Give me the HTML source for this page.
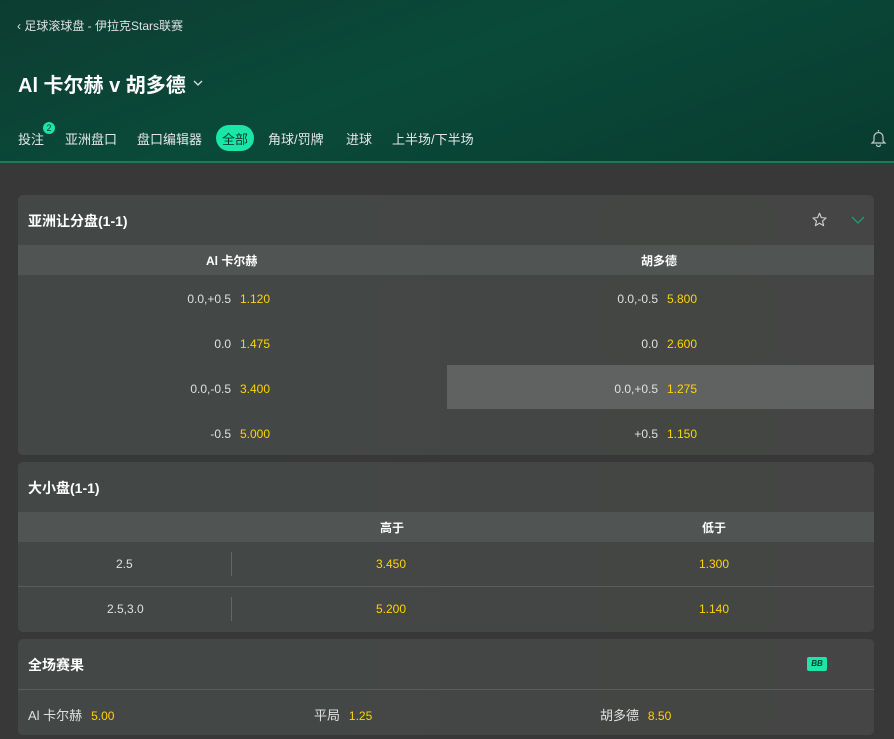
<!DOCTYPE html>
<html><head><meta charset="utf-8"><style>
*{margin:0;padding:0;box-sizing:border-box}
body{width:894px;height:739px;background:#383838;font-family:"Liberation Sans","Noto Sans CJK SC",sans-serif;color:#fff;position:relative;overflow:hidden}
.hdr{position:absolute;left:0;top:0;width:894px;height:163px;background:linear-gradient(160deg,#0c3d31 0%,#0a4a39 45%,#083c2f 100%);border-bottom:2px solid #1f7a5c}
.a{position:absolute;white-space:nowrap}
.card{position:absolute;left:18px;width:856px;background:linear-gradient(90deg,#434846,#444544);border-radius:5px;overflow:hidden}
.ttl{position:absolute;left:10px;font-size:14px;font-weight:bold}
.th{position:absolute;left:0;width:856px;height:30px;background:#505553;font-size:12px;font-weight:bold}
.n{color:#e0e0e0;font-size:12px}
.y{color:#ffd400;font-size:12px}
.tab{position:absolute;top:129px;font-size:13px;color:#e6e6e6}
</style></head><body>
<div class="hdr">
<div class="a" style="left:17px;top:17px;font-size:12px;color:#e0e0e0">‹ 足球滚球盘 - 伊拉克Stars联赛</div>
<div class="a" style="left:18px;top:69px;font-size:20px;font-weight:bold">Al 卡尔赫 v 胡多德</div>
<svg class="a" style="left:193px;top:80px" width="10" height="7"><path d="M1 1l4 4 4-4" stroke="#e0e0e0" stroke-width="1.3" fill="none"/></svg>
<div class="tab" style="left:18px">投注</div>
<div class="a" style="left:43px;top:122px;width:12px;height:12px;border-radius:6px;background:#19e6a7;color:#0b3b2f;font-size:9px;text-align:center;line-height:12px">2</div>
<div class="tab" style="left:65px">亚洲盘口</div>
<div class="tab" style="left:137px">盘口编辑器</div>
<div class="a" style="left:216px;top:125px;width:38px;height:26px;border-radius:13px;background:#19e6a7;color:#0b3b2f;font-size:13px;display:flex;align-items:center;justify-content:center">全部</div>
<div class="tab" style="left:268px">角球/罚牌</div>
<div class="tab" style="left:346px">进球</div>
<div class="tab" style="left:392px">上半场/下半场</div>
<svg class="a" style="left:870px;top:129px" width="17" height="18" viewBox="0 0 17 18" fill="none" stroke="#c8c8c8" stroke-width="1.2"><path d="M8.5 1v1.5M4 12V8a4.5 4.5 0 0 1 9 0v4l2 2H2z M6.5 15.5a2 2 0 0 0 4 0"/></svg>
</div>

<div class="card" style="top:195px;height:260px">
<div class="ttl" style="top:16px">亚洲让分盘(1-1)</div>
<svg class="a" style="left:794px;top:17px" width="15" height="15" viewBox="0 0 24 24"><path d="M12 2l3 7 7.5.6-5.7 4.9 1.8 7.4L12 18l-6.6 3.9 1.8-7.4L1.5 9.6 9 9z" fill="none" stroke="#cfcfcf" stroke-width="1.8" stroke-linejoin="round"/></svg>
<svg class="a" style="left:833px;top:20px" width="14" height="10"><path d="M1 2l6 6 6-6" stroke="#1f9e74" stroke-width="1.3" fill="none"/></svg>
<div class="th" style="top:50px"><span class="a" style="left:188px;top:7px">Al 卡尔赫</span><span class="a" style="left:623px;top:7px">胡多德</span></div>
<div class="a" style="left:429px;top:170px;width:427px;height:44px;background:#5f6260"></div>
<div class="a" style="right:604px;top:95px"><span class="n">0.0,+0.5</span>&nbsp; <span class="y">1.120</span></div>
<div class="a" style="right:177px;top:95px"><span class="n">0.0,-0.5</span>&nbsp; <span class="y">5.800</span></div>
<div class="a" style="right:604px;top:140px"><span class="n">0.0</span>&nbsp; <span class="y">1.475</span></div>
<div class="a" style="right:177px;top:140px"><span class="n">0.0</span>&nbsp; <span class="y">2.600</span></div>
<div class="a" style="right:604px;top:185px"><span class="n">0.0,-0.5</span>&nbsp; <span class="y">3.400</span></div>
<div class="a" style="right:177px;top:185px"><span class="n">0.0,+0.5</span>&nbsp; <span class="y">1.275</span></div>
<div class="a" style="right:604px;top:230px"><span class="n">-0.5</span>&nbsp; <span class="y">5.000</span></div>
<div class="a" style="right:177px;top:230px"><span class="n">+0.5</span>&nbsp; <span class="y">1.150</span></div>
</div>

<div class="card" style="top:462px;height:170px">
<div class="ttl" style="top:16px">大小盘(1-1)</div>
<div class="th" style="top:50px"><span class="a" style="left:362px;top:7px">高于</span><span class="a" style="left:684px;top:7px">低于</span></div>
<div class="a" style="left:213px;top:90px;width:1px;height:24px;background:#666"></div>
<div class="a" style="left:0;top:124px;width:856px;height:1px;background:#5a5d5b"></div>
<div class="a" style="left:213px;top:135px;width:1px;height:24px;background:#666"></div>
<div class="a n" style="left:98px;top:95px">2.5</div>
<div class="a y" style="left:358px;top:95px">3.450</div>
<div class="a y" style="left:681px;top:95px">1.300</div>
<div class="a n" style="left:89px;top:140px">2.5,3.0</div>
<div class="a y" style="left:358px;top:140px">5.200</div>
<div class="a y" style="left:681px;top:140px">1.140</div>
</div>

<div class="card" style="top:639px;height:96px">
<div class="ttl" style="top:16px">全场赛果</div>
<div class="a" style="left:789px;top:18px;width:20px;height:14px;background:#19e6a7;border-radius:2px;color:#0b3b2f;font-size:8px;font-weight:bold;text-align:center;line-height:14px;font-style:italic">BB</div>
<div class="a" style="left:0;top:50px;width:856px;height:1px;background:#5a5d5b"></div>
<div class="a" style="left:10px;top:66px"><span class="n" style="font-size:13px">Al 卡尔赫</span>&nbsp; <span class="y">5.00</span></div>
<div class="a" style="left:296px;top:66px"><span class="n" style="font-size:13px">平局</span>&nbsp; <span class="y">1.25</span></div>
<div class="a" style="left:582px;top:66px"><span class="n" style="font-size:13px">胡多德</span>&nbsp; <span class="y">8.50</span></div>
</div>
</body></html>
